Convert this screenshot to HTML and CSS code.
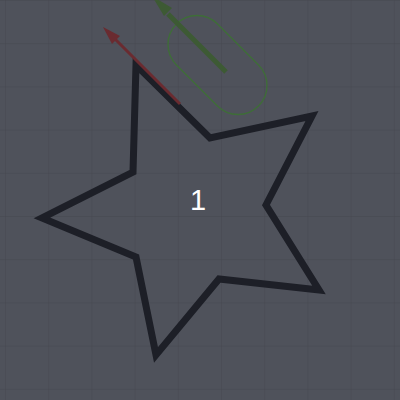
FILE: index.html
```html
<!DOCTYPE html>
<html>
<head>
<meta charset="utf-8">
<link rel="stylesheet" href="styles.css">
</head>
<body>
<div class="canvas">
  <svg class="scene" width="400" height="400" viewBox="0 0 400 400" xmlns="http://www.w3.org/2000/svg">
    <defs>
      <pattern id="grid" x="5" y="0" width="43.2" height="43.2" patternUnits="userSpaceOnUse">
        <path d="M0 0 H43.2 M0 0 V43.2" class="gridline"/>
      </pattern>
    </defs>
    <rect width="400" height="400" fill="url(#grid)"/>
    <polygon class="star" points="136,65 210,138 312,116 266,205 319,290 219,279 156,355 136,257 42,218 133,172"/>
    <g transform="rotate(45 217.5 65)">
      <rect class="capsule" x="159.5" y="36" width="116" height="58" rx="29" ry="29"/>
    </g>
    <line class="green-shaft" x1="226" y1="72" x2="168" y2="14"/>
    <polygon class="green-head" points="152,-4 172,8 164,16"/>
    <line class="red-shaft" x1="180" y1="104" x2="114" y2="38"/>
    <polygon class="red-head" points="103,27 120,36 112,44"/>
  </svg>
  <div class="label">1</div>
</div>
</body>
</html>
```
FILE: styles.css
```css
html, body {
  margin: 0;
  padding: 0;
  background: #4f525b;
}
.canvas {
  position: relative;
  width: 400px;
  height: 400px;
  overflow: hidden;
  background: #4f525b;
}
.scene {
  display: block;
}
.gridline {
  stroke: #45474f;
  stroke-width: 1;
  fill: none;
}
.star {
  fill: none;
  stroke: #1d1f27;
  stroke-width: 7;
  stroke-linejoin: miter;
}
.capsule {
  fill: none;
  stroke: #3e6e37;
  stroke-width: 1.3;
}
.green-shaft {
  stroke: #3d5a34;
  stroke-width: 5;
}
.green-head {
  fill: #3d5a34;
}
.red-shaft {
  stroke: #6a2b30;
  stroke-width: 3;
}
.red-head {
  fill: #6a2b30;
}
.label {
  position: absolute;
  left: 190px;
  top: 183px;
  font-family: "Liberation Sans", Arial, sans-serif;
  font-size: 29px;
  line-height: 34px;
  color: #ffffff;
}
```
